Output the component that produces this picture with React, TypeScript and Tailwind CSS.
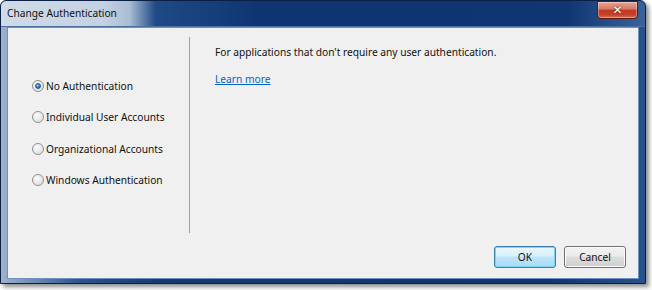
const font = { fontFamily: '"Noto Sans", "Open Sans", Arial, sans-serif' };

function Radio({ checked, label }: { checked?: boolean; label: string }) {
  return (
    <div className="flex items-center gap-[2px] h-[16px]">
      <span className="w-[12px] h-[12px] rounded-full border border-[#8e8f8f] bg-[radial-gradient(circle_at_40%_35%,#fdfdfd,#d4d4d4)] flex items-center justify-center shadow-[inset_0_0_1px_#fff]">
        {checked && (
          <span className="w-[6px] h-[6px] rounded-full bg-[radial-gradient(circle_at_40%_35%,#a9dbf6,#2a7ab8_55%,#0f4f8c)] border border-[#1d5a92]" />
        )}
      </span>
      <span className="text-[10.2px] text-[#111] leading-[16px]">{label}</span>
    </div>
  );
}

function Button({ label, primary }: { label: string; primary?: boolean }) {
  return (
    <button
      className={
        "w-[62px] h-[22px] rounded-[3px] text-[10.2px] text-[#111] leading-none " +
        (primary
          ? "border border-[#3c7fb1] shadow-[inset_0_0_0_1px_#7ed0f4] bg-[linear-gradient(#eaf6fd_0%,#d9f0fc_45%,#bee6fd_50%,#a7d9f5_100%)]"
          : "border border-[#707070] shadow-[inset_0_0_0_1px_#fcfcfc] bg-[linear-gradient(#f2f2f2_0%,#ebebeb_45%,#dddddd_50%,#cfcfcf_100%)]")
      }
    >
      {label}
    </button>
  );
}

export default function App() {
  return (
    <div className="w-[652px] h-[290px] bg-white" style={font}>
      <div className="relative w-[646px] h-[284px] flex flex-col rounded-t-[6px] border border-[#0b1f42] bg-[linear-gradient(to_right,#9fb3cc_0%,#2b5590_12%,#123a74_25%,#0f3672_85%,#27528e_100%)] shadow-[3px_3px_4px_rgba(0,0,0,0.45)]">
        <div className="h-[26px] shrink-0 rounded-t-[6px] bg-[linear-gradient(to_right,#cfdbe8_0%,#c3d1e2_16%,#a8bcd3_20%,#1f4a86_24%,#0e3571_40%,#0f3672_88%,#3a639c_100%)] border-b border-[#4b6f9f] flex items-center pl-[6px]">
          <span className="text-[10.2px] text-[#111] leading-none pb-[1px]">Change Authentication</span>
        </div>
        <div className="absolute right-[7px] top-0 w-[41px] h-[18px] rounded-b-[4px] border border-[#5a1a14] bg-[linear-gradient(#e8a493_0%,#d47865_45%,#bf3a23_50%,#c6402a_80%,#d97155_100%)] flex items-center justify-center shadow-[inset_0_0_0_1px_rgba(255,255,255,0.35)]">
          <span className="text-white text-[12px] font-bold leading-none" style={{ fontFamily: '"DejaVu Sans", sans-serif', textShadow: '0 0 2px #3a0a05' }}>✕</span>
        </div>
        <div className="flex-1 mx-[6px] mb-[4px] border border-[#6f8fbf] bg-[#f0f0f0] flex flex-col pt-[9px]">
          <div className="flex h-[196px]">
            <div className="w-[182px] shrink-0 border-r border-[#a0a0a0] flex flex-col justify-center gap-[15.5px] pl-[24px] pb-[4px]">
              <Radio checked label="No Authentication" />
              <Radio label="Individual User Accounts" />
              <Radio label="Organizational Accounts" />
              <Radio label="Windows Authentication" />
            </div>
            <div className="flex-1 pl-[25px] pt-[7px] flex flex-col gap-[11px]">
              <span className="text-[10.2px] text-[#111] leading-[16px]">
                For applications that don't require any user authentication.
              </span>
              <a className="text-[10.2px] text-[#0066cc] underline leading-[16px] w-fit">Learn more</a>
            </div>
          </div>
          <div className="flex justify-end gap-[8px] pr-[12px] pt-[13px]">
            <Button primary label="OK" />
            <Button label="Cancel" />
          </div>
        </div>
      </div>
    </div>
  );
}
